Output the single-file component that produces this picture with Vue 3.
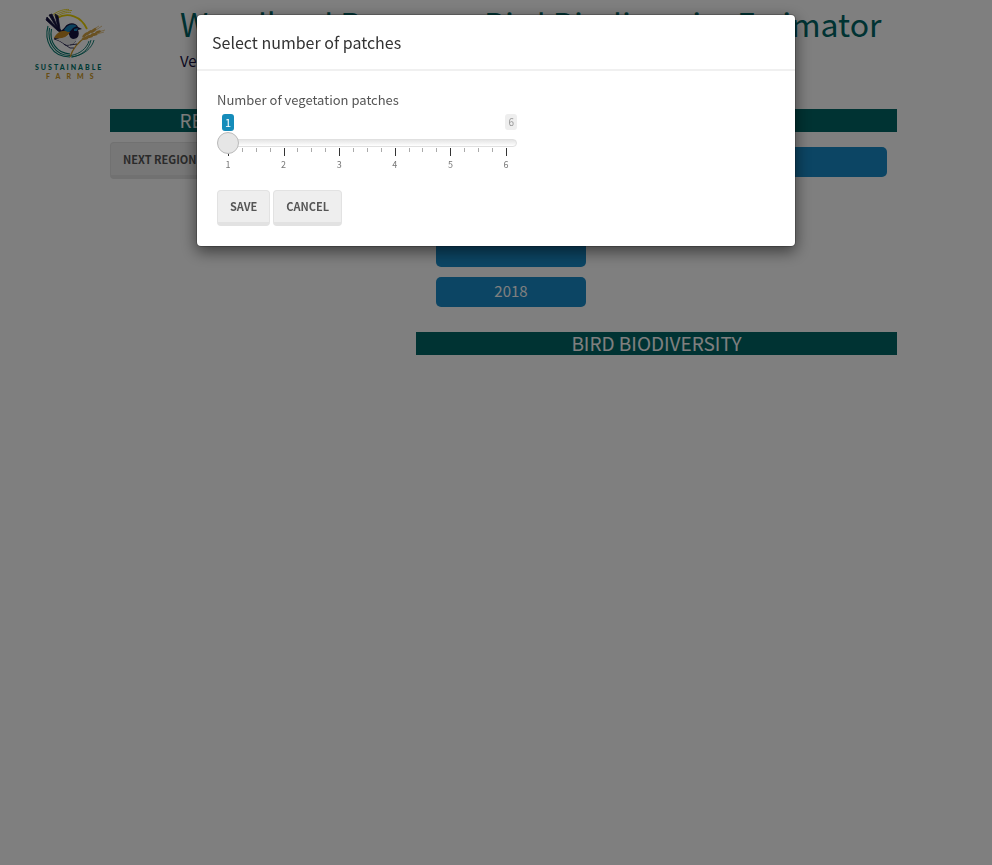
<script setup>
import { ref } from 'vue'

const patches = ref(1)
const steps = [1, 2, 3, 4, 5, 6]
const ticks = Array.from({ length: 21 }, (_, i) => i % 4 === 0)
</script>

<template>
  <div class="page">
    <header class="masthead">
      <svg class="logo" viewBox="0 0 100 90" role="img" aria-label="Sustainable Farms">
        <g fill="none">
          <path d="M28 26 C24 40 31 57 50 57 M29.500 28 C27 41 34 55 50 55.500 M31.500 29 C29 41 36 53 50 54" stroke="#00756b" stroke-width="1.100" />
          <path d="M51 57 C62 56 69 49 71 40 M51 55.500 C60 54 67 48 69 41 M52 57 C64 55 72 48 74 40" stroke="#00756b" stroke-width=".900" />
          <path d="M37 18 C48 12 61 16 67 29" stroke="#ead000" stroke-width="1.800" />
          <path d="M34 16 C40 12 46 10.500 52 10.500 M35 18 C41 13 47 12 51 12.500 M33 14.500 C39 10.500 45 9 49 9.500" stroke="#ead000" stroke-width=".800" />
          <path d="M50 57 C53 48 58 42 66 37" stroke="#cf9b28" stroke-width="1.300" />
          <path d="M34 39 C38 40 42 42 45 45 C49 46 53 44 56 41 M44 44 L50 48 L54 48 M50 45 L57 44" stroke="#25234e" stroke-width=".900" />
        </g>
        <path d="M36 39 C42 39 48 36 53 34 L57 36 C58 42 52 46 46 44Z" fill="#e8e8e8" />
        <path d="M38 31 L26 20 L27 17 L37 28 L29 15 L32 14 L38 28 L35 14 L38 16 L40 29 L43 33Z" fill="#15133f" stroke="#15133f" stroke-width=".800" />
        <path d="M34 39 C36 34 42 31 45 27 C48 22 56 22 58 27 L62 29 L58 30 C60 35 58 39 53 39 C49 38 50 35 48 33 C43 37 39 39 34 39Z" fill="#15133f" />
        <path d="M34 38 C37 32 43 29 50 32 C47 38 41 39 34 38Z" fill="#c68b24" />
        <path d="M44 30 C47 25 52 23 57 26 L53 28 C51 30 50 32 48 32 C46 31 45 31 44 30Z M54 29 L58 28 L57 31 L54 31Z" fill="#1685bd" />
        <g fill="#d4a342">
          <ellipse cx="65" cy="38.500" rx="3.500" ry="1.400" transform="rotate(-12 65 38.500)" />
          <ellipse cx="65" cy="35" rx="3.500" ry="1.400" transform="rotate(-45 65 35)" />
          <ellipse cx="69.500" cy="36.500" rx="3.500" ry="1.400" transform="rotate(-8 69.500 36.500)" />
          <ellipse cx="69" cy="32.500" rx="3.500" ry="1.400" transform="rotate(-40 69 32.500)" />
          <ellipse cx="74" cy="34.500" rx="3.500" ry="1.400" transform="rotate(-8 74 34.500)" />
          <ellipse cx="73.500" cy="30.500" rx="3.500" ry="1.400" transform="rotate(-36 73.500 30.500)" />
          <ellipse cx="78" cy="32" rx="3" ry="1.300" transform="rotate(-20 78 32)" />
        </g>
        <path d="M75 33 L85 30 M76 30 L82 26 M77 34 L84 32 M74 29 L79 26" stroke="#d4a342" stroke-width=".600" />
        <text class="logo-top" x="15" y="70">SUSTAINABLE</text>
        <text class="logo-bottom" x="26" y="79">FARMS</text>
      </svg>
      <div class="heading">
        <h1>Woodland Remnant Bird Biodiversity Estimator</h1>
        <p>Version 1.0</p>
      </div>
    </header>

    <main class="columns">
      <section>
        <h2 class="band">REGION &amp; YEARS</h2>
        <button class="btn next" type="button">Next region</button>
      </section>
      <section>
        <h2 class="band">PATCHES</h2>
        <div class="bubbles">
          <div class="bubble wide"></div>
          <div class="bubble year"></div>
          <div class="bubble">2018</div>
        </div>
        <h2 class="band">BIRD BIODIVERSITY</h2>
      </section>
    </main>

    <div class="backdrop">
      <div class="modal" role="dialog" aria-modal="true" aria-labelledby="dialog-title">
        <div class="modal-header">
          <h4 id="dialog-title">Select number of patches</h4>
        </div>
        <div class="modal-body">
          <label for="patches">Number of vegetation patches</label>
          <div class="slider">
            <div class="flags">
              <output class="flag current" for="patches">{{ patches }}</output>
              <span class="flag">6</span>
            </div>
            <input id="patches" v-model="patches" type="range" min="1" max="6" step="1">
            <div class="ticks">
              <i v-for="(major, i) in ticks" :key="i" :class="{ major }"></i>
            </div>
            <div class="numbers">
              <span v-for="n in steps" :key="n">{{ n }}</span>
            </div>
          </div>
          <div class="actions">
            <button class="btn" type="button">Save</button>
            <button class="btn" type="button">Cancel</button>
          </div>
        </div>
      </div>
    </div>
  </div>
</template>

<style>
body {
  background: #fff;
}
</style>

<style scoped>
.page {
  min-height: 100vh;
  font-family: "Noto Sans CJK SC", "Open Sans", sans-serif;
  font-size: 13px;
  line-height: 18px;
  color: #555;
}
.page * {
  box-sizing: border-box;
}
.masthead {
  display: flex;
  gap: 60px;
  height: 109px;
  padding-left: 20px;
}
.logo {
  flex: none;
  width: 100px;
  height: 90px;
}
.logo-top,
.logo-bottom {
  font-family: Lato, sans-serif;
  font-size: 7px;
  font-weight: 900;
  letter-spacing: 2px;
  fill: #00756b;
}
.logo-bottom {
  letter-spacing: 6px;
  fill: #cf9b28;
}
h1 {
  margin: 0;
  font-size: 32px;
  font-weight: 400;
  line-height: 46px;
  white-space: nowrap;
  color: #006666;
}
.heading p {
  margin: 0;
  font-size: 15px;
  line-height: 30px;
  color: #191144;
}
.columns {
  display: grid;
  grid-template-columns: 286fr 481fr;
  gap: 20px;
  padding: 0 95px 0 110px;
}
.band {
  height: 23px;
  margin: 0;
  background: #006666;
  color: #fff;
  font-size: 19px;
  font-weight: 400;
  line-height: 22px;
  text-align: center;
}
.bubbles {
  display: flex;
  flex-direction: column;
  gap: 10px;
  padding: 15px 10px 25px 20px;
}
.bubble {
  width: 150px;
  height: 30px;
  border-radius: 5px;
  background: #188bc8;
  color: #fff;
  font-size: 15px;
  font-weight: 400;
  line-height: 28px;
  text-align: center;
}
.bubble.wide {
  width: 100%;
}
.bubble.year {
  margin-top: 50px;
}
.btn {
  height: 36px;
  padding: 0 12px 1px;
  border: 1px solid #e2e2e2;
  border-bottom-width: 4px;
  border-radius: 4px;
  background: #eee;
  color: #555;
  font-family: inherit;
  font-size: 11px;
  font-weight: 700;
  line-height: 28px;
  text-transform: uppercase;
}
.next {
  height: 37px;
  margin-top: 10px;
}
.backdrop {
  position: fixed;
  inset: 0;
  padding: 14px 16px;
  background: rgba(0, 0, 0, 0.5);
}
.modal {
  max-width: 600px;
  margin: 0 auto;
  border: 1px solid rgba(0, 0, 0, 0.2);
  border-radius: 5px;
  background: #fff;
  background-clip: padding-box;
  box-shadow: 0 5px 15px rgba(0, 0, 0, 0.5);
}
.modal-header {
  padding: 15px;
  border-bottom: 2px solid #f0f0f0;
}
h4 {
  margin: 0;
  color: #333;
  font-size: 16px;
  font-weight: 400;
  line-height: 24px;
}
.modal-body {
  padding: 20px;
}
label {
  display: block;
}
.slider {
  width: 300px;
  max-width: 100%;
}
.flags {
  display: flex;
  justify-content: space-between;
  height: 18px;
  margin-top: 5px;
  padding-left: 5px;
}
.flag {
  height: 16px;
  padding: 0 3px;
  border-radius: 3px;
  background: #eee;
  color: #999;
  font-size: 10px;
  line-height: 16px;
}
.flag.current {
  height: 17px;
  background: #158cba;
  color: #fff;
  font-size: 11px;
  line-height: 17px;
}
input[type="range"] {
  appearance: none;
  position: relative;
  z-index: 1;
  display: block;
  width: 100%;
  height: 22px;
  margin: 0;
  background: none;
}
input[type="range"]::-webkit-slider-runnable-track {
  height: 8px;
  border: 1px solid #e0e0e0;
  border-radius: 8px;
  background: linear-gradient(#e5e5e5, #fff);
}
input[type="range"]::-webkit-slider-thumb {
  appearance: none;
  width: 22px;
  height: 22px;
  margin: -8px 0 0 -1px;
  border: 1px solid #bbb;
  border-radius: 50%;
  background: #e6e6e6;
}
.ticks {
  display: flex;
  justify-content: space-between;
  height: 8px;
  margin: -6px 10px 0 11px;
}
.ticks i {
  width: 1px;
  height: 4px;
  background: #aaa;
}
.ticks .major {
  height: 8px;
  background: #333;
}
.numbers {
  display: flex;
  justify-content: space-between;
  padding: 2px 6px 0 6px;
  color: #777;
  font-size: 9px;
  line-height: 14px;
}
.numbers span {
  width: 10px;
  text-align: center;
}
.actions {
  display: flex;
  gap: 3px;
  margin-top: 18px;
}
</style>
